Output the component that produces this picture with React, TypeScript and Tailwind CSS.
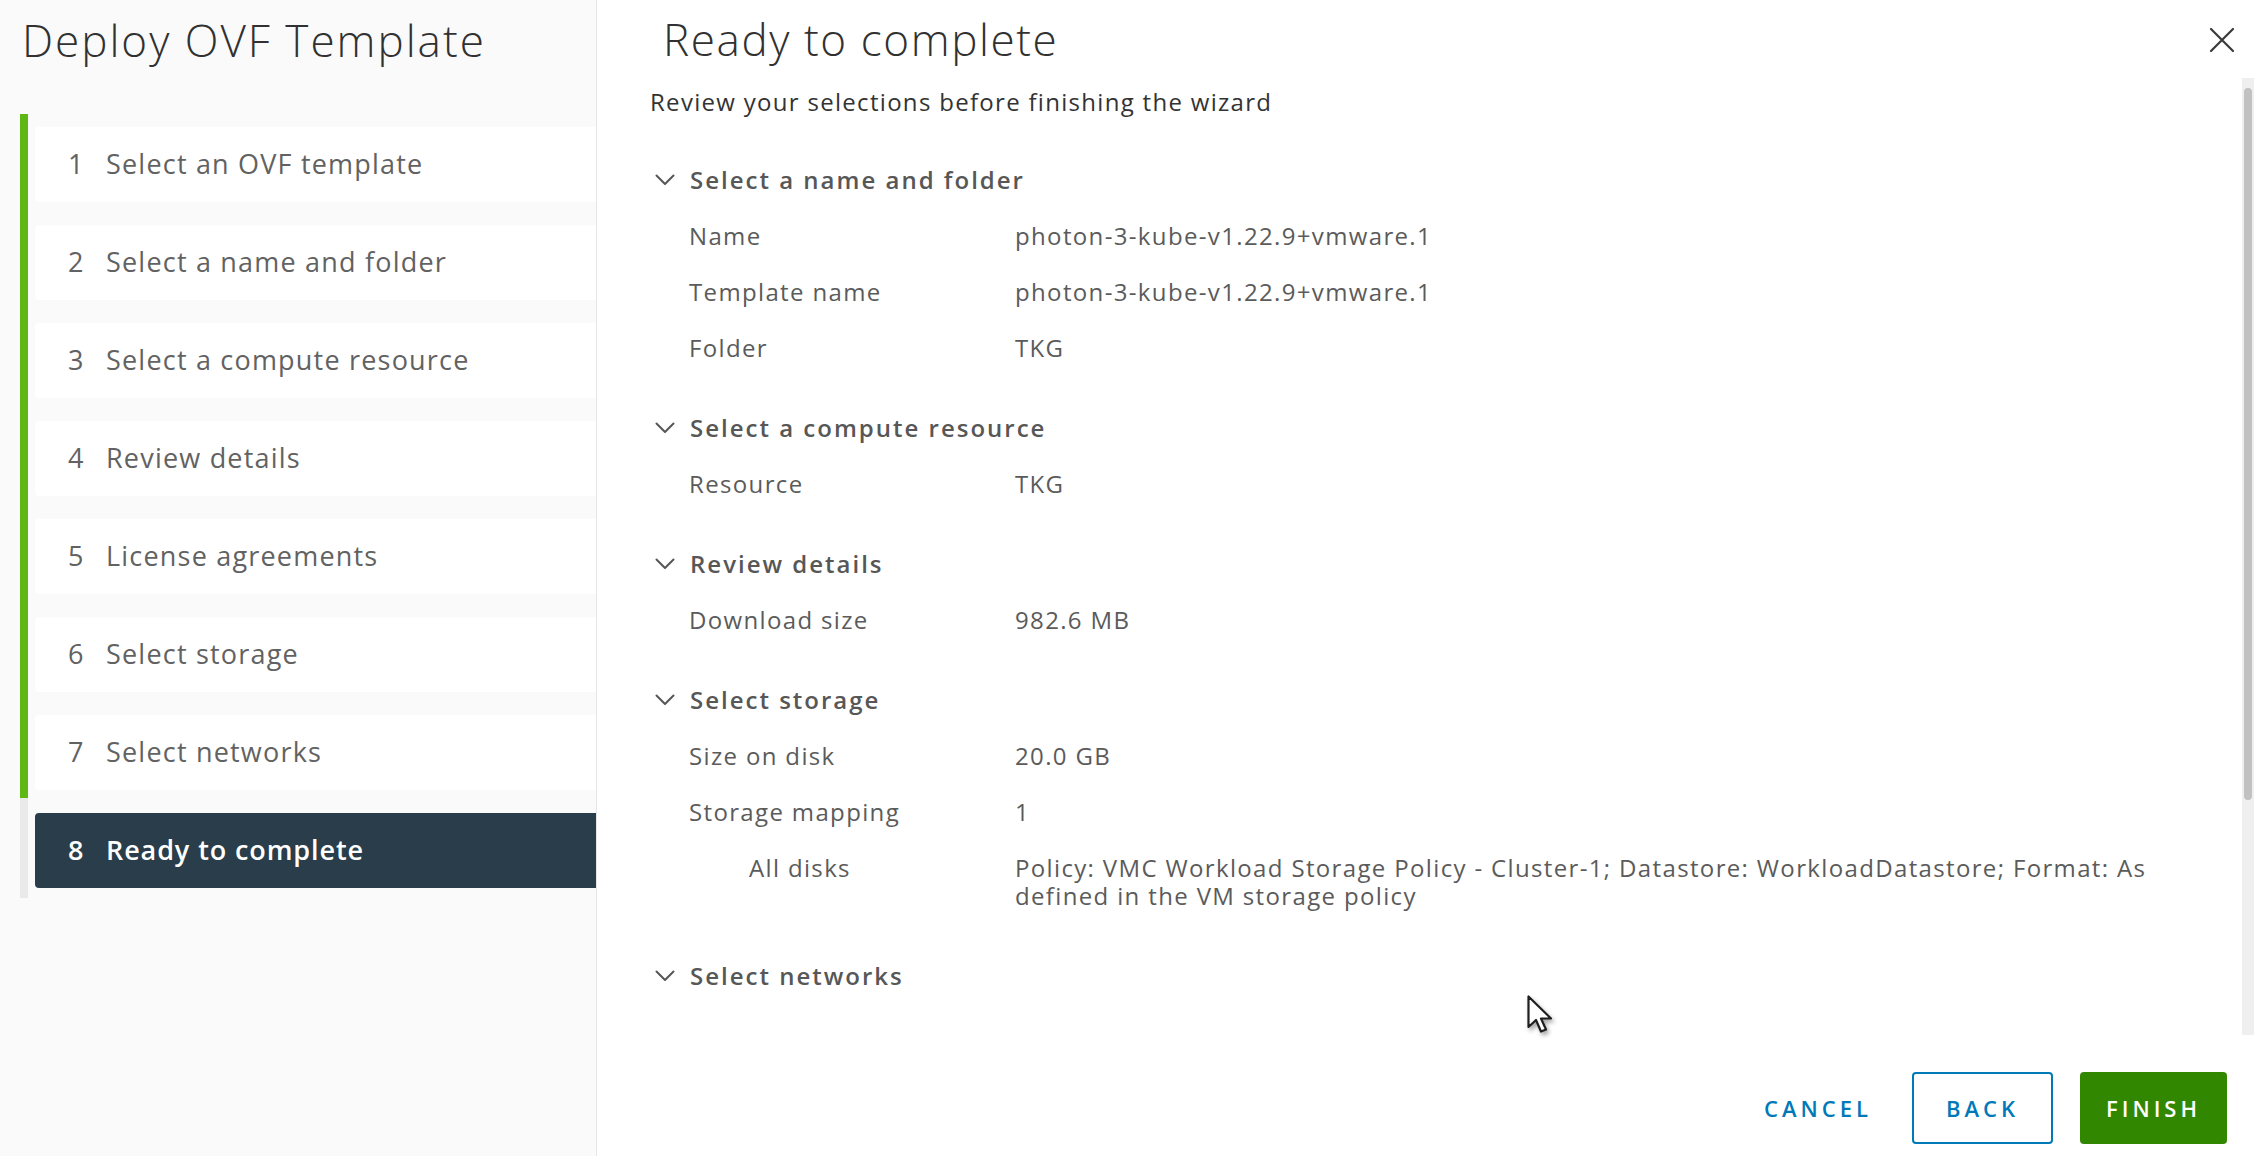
import React from "react";

const steps = [
  "Select an OVF template",
  "Select a name and folder",
  "Select a compute resource",
  "Review details",
  "License agreements",
  "Select storage",
  "Select networks",
  "Ready to complete",
];

type Row = { label: string; value: React.ReactNode; indent?: boolean };
type Section = { title: string; rows: Row[] };

const sections: Section[] = [
  {
    title: "Select a name and folder",
    rows: [
      { label: "Name", value: "photon-3-kube-v1.22.9+vmware.1" },
      { label: "Template name", value: "photon-3-kube-v1.22.9+vmware.1" },
      { label: "Folder", value: "TKG" },
    ],
  },
  {
    title: "Select a compute resource",
    rows: [{ label: "Resource", value: "TKG" }],
  },
  {
    title: "Review details",
    rows: [{ label: "Download size", value: "982.6 MB" }],
  },
  {
    title: "Select storage",
    rows: [
      { label: "Size on disk", value: "20.0 GB" },
      { label: "Storage mapping", value: "1" },
      {
        label: "All disks",
        indent: true,
        value: (
          <>
            Policy: VMC Workload Storage Policy - Cluster-1; Datastore: WorkloadDatastore; Format: As
            <br />
            defined in the VM storage policy
          </>
        ),
      },
    ],
  },
  { title: "Select networks", rows: [] },
];

function Chevron() {
  return (
    <svg width="20" height="12" viewBox="0 0 20 12" fill="none" className="shrink-0">
      <path d="M1.5 1.5 L10 10 L18.5 1.5" stroke="#565656" strokeWidth="2" strokeLinecap="round" strokeLinejoin="round" />
    </svg>
  );
}

function Cursor() {
  return (
    <svg width="28" height="40" viewBox="0 0 28 40" className="absolute left-[1527px] top-[995px] drop-shadow-[2px_3px_2px_rgba(0,0,0,0.35)]">
      <path
        d="M1.5 1.5 L1.5 32 L9 25 L14 36.5 L19 34.5 L14 23.5 L24 23.5 Z"
        fill="#ffffff"
        stroke="#1f1f1f"
        strokeWidth="2.2"
        strokeLinejoin="round"
      />
    </svg>
  );
}

export default function App() {
  return (
    <div className="relative flex h-[1156px] w-[2254px] overflow-hidden bg-white font-['Open_Sans',sans-serif]">
      {/* wizard steps */}
      <aside className="flex w-[597px] shrink-0 flex-col border-r border-[#e6e6e6] bg-[#fafafa]">
        <h1 className="pl-[22px] pt-[8px] text-[44px] font-light leading-[64px] tracking-[2px] text-[#313131]">
          Deploy OVF Template
        </h1>
        <div className="mt-[42px] flex pl-[20px]">
          <div className="flex w-[8px] shrink-0 flex-col">
            <div className="h-[684px] bg-[#5eb715]" />
            <div className="h-[100px] bg-[#e9e9e9]" />
          </div>
          <div className="ml-[7px] flex flex-1 flex-col gap-[23px] pt-[13px]">
            {steps.map((s, i) => {
              const active = i === steps.length - 1;
              return (
                <div
                  key={s}
                  className={
                    active
                      ? "flex h-[75px] items-center rounded-l-[4px] bg-[#293d4a] pl-[33px] text-[27px] font-semibold tracking-[0.9px] text-white"
                      : "flex h-[75px] items-center rounded-l-[4px] bg-white pl-[33px] text-[27px] tracking-[1.2px] text-[#626262]"
                  }
                >
                  <span className="w-[38px] shrink-0">{i + 1}</span>
                  <span>{s}</span>
                </div>
              );
            })}
          </div>
        </div>
      </aside>

      {/* review panel */}
      <main className="flex flex-1 flex-col">
        <header className="flex h-[78px] shrink-0 items-start justify-between pl-[53px]">
          <h2 className="ml-[13px] mt-[7px] text-[44px] font-light leading-[64px] tracking-[1.6px] text-[#313131]">
            Ready to complete
          </h2>
          <button className="mr-[19px] mt-[27px] h-[26px] w-[26px]">
            <svg width="26" height="26" viewBox="0 0 26 26">
              <path d="M2 2 L24 24 M24 2 L2 24" stroke="#3a3a3a" strokeWidth="2.2" strokeLinecap="round" />
            </svg>
          </button>
        </header>

        <div className="flex h-[957px] shrink-0">
          <div className="flex-1 overflow-hidden pl-[53px]">
            <p className="mt-[6px] text-[24px] leading-[36px] tracking-[1.3px] text-[#333333]">
              Review your selections before finishing the wizard
            </p>
            <div className="mt-[31px]">
              {sections.map((sec) => (
                <section key={sec.title} className="mb-[23px]">
                  <div className="flex h-[57px] items-center gap-[15px] pl-[5px]">
                    <Chevron />
                    <span className="text-[24px] font-semibold tracking-[2px] text-[#575757]">{sec.title}</span>
                  </div>
                  {sec.rows.map((r) => (
                    <div key={r.label} className="flex py-[14px] pl-[39px] text-[24px] leading-[28px] tracking-[1.35px] text-[#5b5b5b]">
                      <div className={r.indent ? "w-[326px] shrink-0 pl-[60px]" : "w-[326px] shrink-0"}>{r.label}</div>
                      <div>{r.value}</div>
                    </div>
                  ))}
                </section>
              ))}
            </div>
          </div>
          <div className="w-[12px] shrink-0 bg-[#efefef] px-[2px] pt-[10px]">
            <div className="h-[712px] rounded-full bg-[#c1c1c1]" />
          </div>
        </div>

        <footer className="flex flex-1 items-start justify-end gap-[27px] pr-[27px] pt-[37px]">
          <button className="h-[72px] px-[13px] text-[22px] font-semibold tracking-[4px] text-[#0079b8]">CANCEL</button>
          <button className="h-[72px] w-[141px] rounded-[4px] border-2 border-[#0079b8] text-[22px] font-semibold tracking-[4px] text-[#0079b8]">
            BACK
          </button>
          <button className="h-[72px] w-[147px] rounded-[4px] bg-[#318700] text-[22px] font-semibold tracking-[4px] text-white">
            FINISH
          </button>
        </footer>
      </main>

      <Cursor />
    </div>
  );
}
